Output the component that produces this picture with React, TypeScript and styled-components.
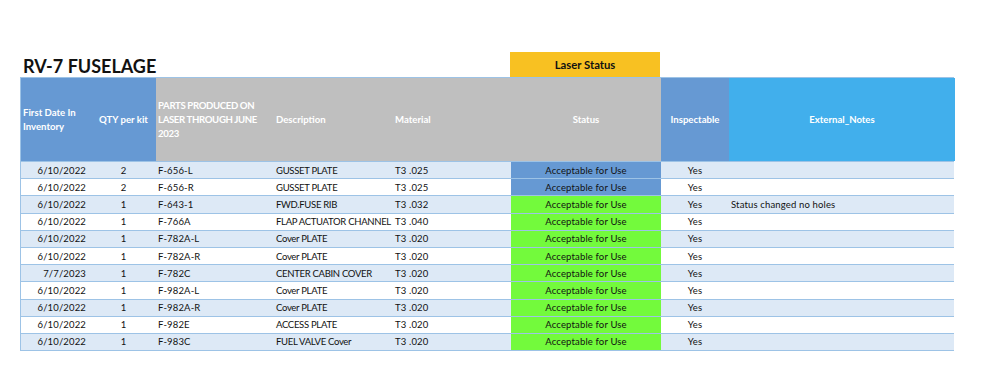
import React from "react";
import styled, { createGlobalStyle } from "styled-components";

const GlobalStyle = createGlobalStyle`
  html, body { margin: 0; padding: 0; background: #ffffff; }
  body { font-family: Lato, "Open Sans", "Liberation Sans", sans-serif; color: #111; }
`;

const COLS = "70px 65px 118px 119px 118px 150px 68px 226px";

const Page = styled.div`
  padding: 52px 0 0 20px;
  width: 934px;
`;

const TopRow = styled.div`
  display: grid;
  grid-template-columns: ${COLS};
  height: 25px;
`;

const Title = styled.h1`
  grid-column: 1 / 5;
  margin: 0;
  padding-left: 3px;
  align-self: end;
  font-size: 18px;
  line-height: 22px;
  font-weight: 700;
  color: #111;
`;

const LaserStatus = styled.div`
  grid-column: 6 / 7;
  background: #f8c122;
  display: flex;
  align-items: center;
  justify-content: center;
  font-weight: 700;
  font-size: 11.3px;
  color: #111;
`;

const HeaderRow = styled.div`
  display: grid;
  grid-template-columns: ${COLS};
  height: 85px;
  box-sizing: border-box;
  border: 1px solid #9dc3e6;
`;

type Align = "left" | "center" | "right";

const HeadCell = styled.div<{ $bg: string; $align: Align; $caps?: boolean }>`
  background: ${(p) => p.$bg};
  color: #ffffff;
  font-weight: 700;
  font-size: 9.6px;
  letter-spacing: ${(p) => (p.$caps ? "-0.35px" : "0")};
  line-height: 14px;
  display: flex;
  align-items: center;
  justify-content: ${(p) =>
    p.$align === "left" ? "flex-start" : p.$align === "right" ? "flex-end" : "center"};
  text-align: ${(p) => p.$align};
  padding: 0 2px;
  box-sizing: border-box;
`;

const DataRow = styled.div<{ $striped: boolean }>`
  display: grid;
  grid-template-columns: ${COLS};
  height: 17.2px;
  box-sizing: border-box;
  border-bottom: 1px solid #9dc3e6;
  border-left: 1px solid #9dc3e6;
  background: ${(p) => (p.$striped ? "#dde9f6" : "#ffffff")};
`;

const Cell = styled.div<{ $align: Align; $bg?: string; $tight?: boolean }>`
  font-size: 9.5px;
  letter-spacing: ${(p) => (p.$tight ? "-0.3px" : "0.15px")};
  color: #111;
  display: flex;
  align-items: center;
  justify-content: ${(p) =>
    p.$align === "left" ? "flex-start" : p.$align === "right" ? "flex-end" : "center"};
  padding: ${(p) => (p.$align === "right" ? "0 5px 0 0" : "0 2px")};
  white-space: nowrap;
  overflow: hidden;
  background: ${(p) => p.$bg ?? "transparent"};
  box-sizing: border-box;
`;

type Row = {
  date: string;
  qty: string;
  part: string;
  desc: string;
  mat: string;
  status: "blue" | "green";
  notes?: string;
};

const rows: Row[] = [
  { date: "6/10/2022", qty: "2", part: "F-656-L", desc: "GUSSET PLATE", mat: "T3 .025", status: "blue" },
  { date: "6/10/2022", qty: "2", part: "F-656-R", desc: "GUSSET PLATE", mat: "T3 .025", status: "blue" },
  { date: "6/10/2022", qty: "1", part: "F-643-1", desc: "FWD.FUSE RIB", mat: "T3 .032", status: "green", notes: "Status changed no holes" },
  { date: "6/10/2022", qty: "1", part: "F-766A", desc: "FLAP ACTUATOR CHANNEL", mat: "T3 .040", status: "green" },
  { date: "6/10/2022", qty: "1", part: "F-782A-L", desc: "Cover PLATE", mat: "T3 .020", status: "green" },
  { date: "6/10/2022", qty: "1", part: "F-782A-R", desc: "Cover PLATE", mat: "T3 .020", status: "green" },
  { date: "7/7/2023", qty: "1", part: "F-782C", desc: "CENTER CABIN COVER", mat: "T3 .020", status: "green" },
  { date: "6/10/2022", qty: "1", part: "F-982A-L", desc: "Cover PLATE", mat: "T3 .020", status: "green" },
  { date: "6/10/2022", qty: "1", part: "F-982A-R", desc: "Cover PLATE", mat: "T3 .020", status: "green" },
  { date: "6/10/2022", qty: "1", part: "F-982E", desc: "ACCESS PLATE", mat: "T3 .020", status: "green" },
  { date: "6/10/2022", qty: "1", part: "F-983C", desc: "FUEL VALVE Cover", mat: "T3 .020", status: "green" },
];

const BLUE = "#6699d3";
const GREY = "#bfbfbf";
const SKY = "#41afec";
const GREEN = "#73fa3c";

export default function App() {
  return (
    <>
      <GlobalStyle />
      <Page>
        <TopRow>
          <Title>RV-7 FUSELAGE</Title>
          <LaserStatus>Laser Status</LaserStatus>
        </TopRow>
        <HeaderRow>
          <HeadCell $bg={BLUE} $align="left">First Date In Inventory</HeadCell>
          <HeadCell $bg={BLUE} $align="center">QTY per kit</HeadCell>
          <HeadCell $bg={GREY} $align="left" $caps>PARTS PRODUCED ON LASER THROUGH JUNE 2023</HeadCell>
          <HeadCell $bg={GREY} $align="left">Description</HeadCell>
          <HeadCell $bg={GREY} $align="left">Material</HeadCell>
          <HeadCell $bg={GREY} $align="center">Status</HeadCell>
          <HeadCell $bg={BLUE} $align="center">Inspectable</HeadCell>
          <HeadCell $bg={SKY} $align="center">External_Notes</HeadCell>
        </HeaderRow>
        {rows.map((r, i) => (
          <DataRow key={i} $striped={i % 2 === 0}>
            <Cell $align="right">{r.date}</Cell>
            <Cell $align="center">{r.qty}</Cell>
            <Cell $align="left">{r.part}</Cell>
            <Cell $align="left" $tight>{r.desc}</Cell>
            <Cell $align="left">{r.mat}</Cell>
            <Cell $align="center" $bg={r.status === "blue" ? BLUE : GREEN}>
              Acceptable for Use
            </Cell>
            <Cell $align="center">Yes</Cell>
            <Cell $align="left">{r.notes ?? ""}</Cell>
          </DataRow>
        ))}
      </Page>
    </>
  );
}
